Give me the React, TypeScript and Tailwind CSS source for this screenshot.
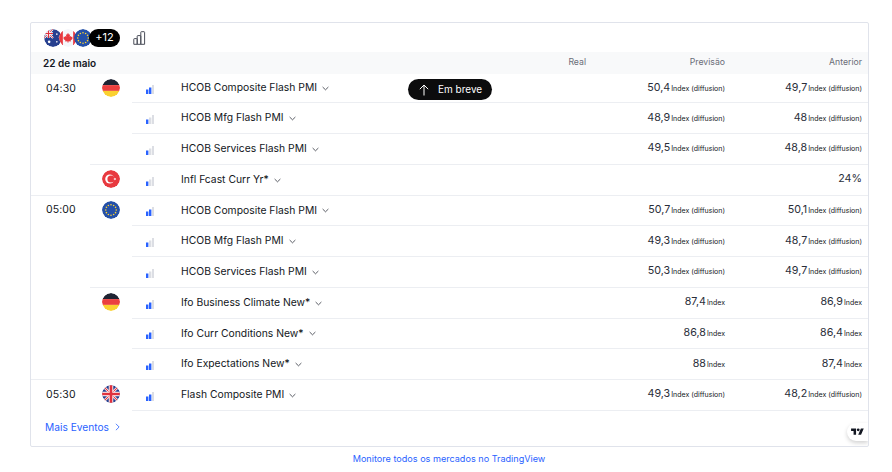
import React from 'react';

type Flag = 'de' | 'tr' | 'eu' | 'gb';

type EventRow = { title: string; level: number; forecast: string; previous: string; forecastUnit?: string; previousUnit?: string };

const DIFF = 'Index (diffusion)';

const SCHEDULE: { time: string; countries: { flag: Flag; events: EventRow[] }[] }[] = [
  {
    time: '04:30',
    countries: [
      {
        flag: 'de',
        events: [
          { title: 'HCOB Composite Flash PMI', level: 2, forecast: '50,4', forecastUnit: DIFF, previous: '49,7', previousUnit: DIFF },
          { title: 'HCOB Mfg Flash PMI', level: 1, forecast: '48,9', forecastUnit: DIFF, previous: '48', previousUnit: DIFF },
          { title: 'HCOB Services Flash PMI', level: 1, forecast: '49,5', forecastUnit: DIFF, previous: '48,8', previousUnit: DIFF },
        ],
      },
      { flag: 'tr', events: [{ title: 'Infl Fcast Curr Yr*', level: 1, forecast: '', previous: '24%' }] },
    ],
  },
  {
    time: '05:00',
    countries: [
      {
        flag: 'eu',
        events: [
          { title: 'HCOB Composite Flash PMI', level: 2, forecast: '50,7', forecastUnit: DIFF, previous: '50,1', previousUnit: DIFF },
          { title: 'HCOB Mfg Flash PMI', level: 1, forecast: '49,3', forecastUnit: DIFF, previous: '48,7', previousUnit: DIFF },
          { title: 'HCOB Services Flash PMI', level: 1, forecast: '50,3', forecastUnit: DIFF, previous: '49,7', previousUnit: DIFF },
        ],
      },
      {
        flag: 'de',
        events: [
          { title: 'Ifo Business Climate New*', level: 2, forecast: '87,4', forecastUnit: 'Index', previous: '86,9', previousUnit: 'Index' },
          { title: 'Ifo Curr Conditions New*', level: 2, forecast: '86,8', forecastUnit: 'Index', previous: '86,4', previousUnit: 'Index' },
          { title: 'Ifo Expectations New*', level: 2, forecast: '88', forecastUnit: 'Index', previous: '87,4', previousUnit: 'Index' },
        ],
      },
    ],
  },
  {
    time: '05:30',
    countries: [
      { flag: 'gb', events: [{ title: 'Flash Composite PMI', level: 2, forecast: '49,3', forecastUnit: DIFF, previous: '48,2', previousUnit: DIFF }] },
    ],
  },
];

const EU_STARS = Array.from({ length: 12 }, (_, i) => {
  const a = (i * Math.PI) / 6;
  return { x: 14 + 8.2 * Math.sin(a), y: 14 - 8.2 * Math.cos(a) };
});

function FlagIcon({ flag, className }: { flag: Flag | 'au' | 'ca'; className: string }) {
  return (
    <svg viewBox="0 0 28 28" className={`block rounded-full ${className}`}>
      <clipPath id={`clip-${flag}`}>
        <circle cx="14" cy="14" r="14" />
      </clipPath>
      <g clipPath={`url(#clip-${flag})`}>
        {flag === 'de' && (
          <>
            <rect width="28" height="9.5" fill="#1f2433" />
            <rect y="9.5" width="28" height="9" fill="#eb3f3f" />
            <rect y="18.5" width="28" height="9.5" fill="#fad130" />
          </>
        )}
        {flag === 'tr' && (
          <>
            <rect width="28" height="28" fill="#e8393f" />
            <circle cx="12" cy="14" r="7" fill="#fff" />
            <circle cx="14" cy="14" r="5.6" fill="#e8393f" />
            <path d="M17.5 14l4.6-1.6-2.8 3.9v-4.6l2.8 3.9z" fill="#fff" />
          </>
        )}
        {flag === 'eu' && (
          <>
            <rect width="28" height="28" fill="#2450a8" />
            {EU_STARS.map((s, i) => (
              <circle key={i} cx={s.x} cy={s.y} r="1.25" fill="#fad130" />
            ))}
          </>
        )}
        {flag === 'gb' && (
          <>
            <rect width="28" height="28" fill="#27408f" />
            <path d="M0 0l28 28M28 0L0 28" stroke="#fff" strokeWidth="4" />
            <path d="M0 0l28 28M28 0L0 28" stroke="#e0313d" strokeWidth="1.6" />
            <path d="M14 0v28M0 14h28" stroke="#fff" strokeWidth="7" />
            <path d="M14 0v28M0 14h28" stroke="#e0313d" strokeWidth="4.2" />
          </>
        )}
        {flag === 'au' && (
          <>
            <rect width="28" height="28" fill="#27408f" />
            <path d="M0 0l14 14M14 0L0 14" stroke="#fff" strokeWidth="3" />
            <path d="M0 0l14 14M14 0L0 14" stroke="#e0313d" strokeWidth="1.2" />
            <path d="M7 0v14M0 7h14" stroke="#fff" strokeWidth="3.6" />
            <path d="M7 0v14M0 7h14" stroke="#e0313d" strokeWidth="1.8" />
            <circle cx="8" cy="20" r="2" fill="#fff" />
            <circle cx="20" cy="8" r="1.2" fill="#fff" />
            <circle cx="24" cy="13" r="1.2" fill="#fff" />
            <circle cx="20" cy="20" r="1.2" fill="#fff" />
          </>
        )}
        {flag === 'ca' && (
          <>
            <rect width="28" height="28" fill="#f5f6fa" />
            <rect width="6" height="28" fill="#e8393f" />
            <rect x="22" width="6" height="28" fill="#e8393f" />
            <path d="M14 6l1.6 3 1.7-.8-.7 4 2-1.4.6 1.6 2-.3-.7 2.4.9.5-3.4 2.8.5 1.6-3.7-.5V21h-1.6v-2.1l-3.7.5.5-1.6-3.4-2.8.9-.5-.7-2.4 2 .3.6-1.6 2 1.4-.7-4 1.7.8z" fill="#e8393f" />
          </>
        )}
      </g>
    </svg>
  );
}

function Importance({ level }: { level: number }) {
  const bars = [
    { x: 0, h: 4.5 },
    { x: 3, h: 6.5 },
    { x: 6, h: 9 },
  ];
  return (
    <svg viewBox="0 0 8.4 10" className="block w-[8.4px] h-[10px]">
      {bars.map((b, i) => (
        <rect key={i} x={b.x} y={10 - b.h} width="2.4" height={b.h} fill={i < level ? '#2962ff' : '#dcdee4'} />
      ))}
    </svg>
  );
}

function Chevron() {
  return (
    <svg viewBox="0 0 8 5" className="w-[7px] h-[5px] ml-[5px] mt-[1px]" fill="none" stroke="#131722" strokeWidth="0.8">
      <path d="M.7.8L4 4l3.3-3.2" />
    </svg>
  );
}

function Value({ value, unit }: { value: string; unit?: string }) {
  return (
    <span className="flex items-baseline justify-end whitespace-nowrap -mt-[1px]">
      <span className="text-[10.7px] text-[#2a2e39]">{value}</span>
      {unit && <span className="text-[7px] ml-[1px]">{unit}</span>}
    </span>
  );
}

export default function App() {
  return (
    <div className="w-[892px] h-[472px] bg-white text-[#131722] overflow-hidden" style={{ fontFamily: 'Inter, "Liberation Sans", sans-serif' }}>
      <div className="pt-[22px] pl-[30px] pr-[23px]">
        <div className="relative h-[425px] border border-[#e0e3eb] rounded-[2px] overflow-hidden">
          {/* toolbar */}
          <div className="h-[29px] flex items-center pl-[13px]">
            <FlagIcon flag="au" className="w-[18px] h-[18px]" />
            <FlagIcon flag="ca" className="w-[18px] h-[18px] -ml-[3px]" />
            <FlagIcon flag="eu" className="w-[18px] h-[18px] -ml-[3px]" />
            <span className="-ml-[3px] h-[18px] w-[31px] rounded-full bg-black text-white text-[11px] flex items-center justify-center">+12</span>
            <svg viewBox="0 0 14 14" className="w-[14px] h-[14px] ml-[13px]" fill="none" stroke="#4a4e59" strokeWidth="1">
              <path d="M.8 13.3V8.2q0-.6.6-.6h2.2q.6 0 .6.6v5.1zM4.2 13.3V5.2q0-.6.6-.6h2.4q.6 0 .6.6v8.1zM7.8 13.3V1.3q0-.6.6-.6h2.6q.6 0 .6.6v12z" />
            </svg>
          </div>

          {/* date header */}
          <div className="h-[22px] bg-[#f8f9fa] flex items-center text-[10px]">
            <span className="pl-[12px] font-semibold flex-1">22 de maio</span>
            <span className="w-[60px] text-right text-[#6a6d78] text-[8.7px] mr-[79px]">Real</span>
            <span className="w-[60px] text-right text-[#6a6d78] text-[8.7px] mr-[77px]">Previsão</span>
            <span className="w-[60px] text-right text-[#6a6d78] text-[8.7px] mr-[6px]">Anterior</span>
          </div>

          {/* events */}
          {SCHEDULE.map((slot, s) => (
            <div key={slot.time} className={`flex ${s < SCHEDULE.length - 1 ? 'border-b border-[#eceef2]' : ''}`}>
              <div className="w-[59px] pl-[15px] pt-[7.5px] text-[10.5px] leading-[14px] tracking-[0.1px]">{slot.time}</div>
              <div className="flex-1">
                {slot.countries.map((country, c) => (
                  <div key={c} className={`flex ${c < slot.countries.length - 1 ? 'border-b border-[#eceef2]' : ''}`}>
                    <div className="w-[42px] flex justify-center pt-[5px]">
                      <FlagIcon flag={country.flag} className="w-[18px] h-[18px]" />
                    </div>
                    <div className="flex-1">
                      {country.events.map((ev, e) => {
                        const isFirst = s === 0 && c === 0 && e === 0;
                        const lastInCountry = e === country.events.length - 1;
                        const showLine = !lastInCountry || s === SCHEDULE.length - 1;
                        return (
                          <div
                            key={e}
                            className={`flex items-center ${isFirst ? 'h-[29.25px] border-b border-[#eceef2]' : showLine ? 'h-[30.75px] border-b border-[#eceef2]' : 'h-[29.75px]'}`}
                          >
                            <div className="w-[49px] pl-[14px] pt-[2px]">
                              <Importance level={ev.level} />
                            </div>
                            <div className="flex items-center text-[10.35px] whitespace-nowrap">
                              {ev.title}
                              <Chevron />
                            </div>
                            <div className="ml-auto w-[140px] text-right"><Value value={ev.forecast} unit={ev.forecastUnit} /></div>
                            <div className="w-[137px] mr-[6px] text-right"><Value value={ev.previous} unit={ev.previousUnit} /></div>
                          </div>
                        );
                      })}
                    </div>
                  </div>
                ))}
              </div>
            </div>
          ))}

          <a className="flex items-center mt-[9px] pl-[14px] text-[10.2px] text-[#2962ff]">
            Mais Eventos
            <svg viewBox="0 0 6 10" className="w-[5px] h-[8px] ml-[6px]" fill="none" stroke="#2962ff" strokeWidth="1">
              <path d="M1 1l4 4-4 4" />
            </svg>
          </a>

          {/* back to top pill */}
          <div className="absolute left-[377px] top-[56px] h-[21px] w-[84px] rounded-full bg-[#0c0c0d] text-white flex items-center pl-[10px] text-[10px]">
            <svg viewBox="0 0 12 12" className="w-[12px] h-[12px]" fill="none" stroke="#fff" strokeWidth="1">
              <path d="M6 11.5V1M1.8 5.2L6 1l4.2 4.2" />
            </svg>
            <span className="ml-[8px]">Em breve</span>
          </div>

          {/* tradingview badge */}
          <div className="absolute right-0 top-[400px] h-[18px] w-[21px] rounded-l-full bg-white shadow-[0_2px_4px_rgba(0,0,0,0.18)] flex items-center justify-end pr-[4px]">
            <svg viewBox="0 0 36 28" className="w-[13px] h-[10px]" fill="#131722">
              <path d="M14 22H7V11H0V4h14v18zM28 22h-8l7.5-18h8L28 22z" />
              <circle cx="20" cy="8" r="4" />
            </svg>
          </div>
        </div>
        <a className="block text-center mt-[5px] pr-[1px] text-[9.1px] text-[#2962ff]">Monitore todos os mercados no TradingView</a>
      </div>
    </div>
  );
}
